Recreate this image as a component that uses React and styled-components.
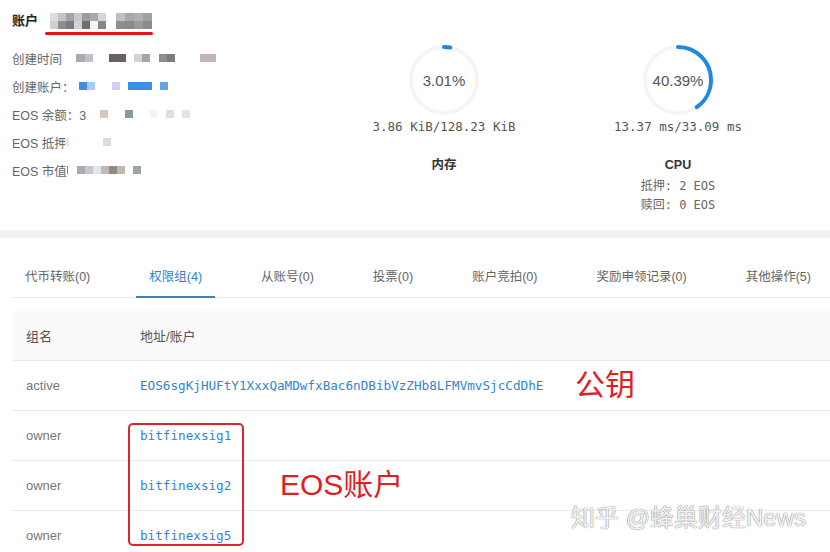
import React from 'react';
import styled, { createGlobalStyle } from 'styled-components';

const sans = `"Liberation Sans", "Noto Sans CJK SC", sans-serif`;
const mono = `"DejaVu Sans Mono", "Noto Sans CJK SC", monospace`;

const GlobalStyle = createGlobalStyle`
  body {
    margin: 0;
    background: #fff;
    font-family: ${sans};
    overflow: hidden;
  }
`;

// blurred (mosaic) values, in [gap before, width, colour]
const titleTiles = [
  [
    [0, 8, '#dcdcdc'], [0, 8, '#c4c4c8'], [0, 8, '#a4a4a8'], [0, 8, '#c9c9cb'], [0, 8, '#9c9c9c'], [0, 8, '#a9a9a9'], [0, 8, '#d6d6d6'],
    [10, 9, '#c0c0c0'], [0, 9, '#a8a8a8'], [0, 9, '#b0b0b0'], [0, 9, '#a0a0a0'],
  ],
  [
    [0, 8, '#cfcfcf'], [0, 8, '#8d8d90'], [0, 8, '#7c7c80'], [0, 8, '#d2d2d6'], [0, 8, '#6f6f72'], [0, 8, '#f4f4f4'], [0, 8, '#88888a'],
    [10, 9, '#8e8e8e'], [0, 9, '#8a8a8a'], [0, 9, '#9a9a9a'], [0, 9, '#8c8c8c'],
  ],
];

const rows = [
  {
    label: '创建时间',
    tiles: [[14, 9, '#a9a9b6'], [0, 8, '#c0c0c8'], [16, 17, '#6c6068'], [8, 8, '#d4d4d4'], [0, 8, '#a8a8a8'], [9, 8, '#908c88'], [0, 8, '#7c7c82'], [25, 16, '#c2b6b4']],
  },
  {
    label: '创建账户：',
    tiles: [[4, 8, '#3f8ee0'], [0, 8, '#a9cdf0'], [17, 8, '#cfd0f2'], [8, 24, '#3d8ee6'], [8, 8, '#62a4e6']],
  },
  {
    label: 'EOS 余额：3',
    tiles: [[14, 8, '#d4c8c0'], [17, 8, '#8a9a98'], [17, 8, '#f2f4f6'], [8, 8, '#dedede'], [8, 8, '#e4e4e4']],
  },
  {
    label: 'EOS 抵押',
    tiles: [[-2, 4, '#e8e8e8'], [34, 8, '#dcdcdc']],
  },
  {
    label: 'EOS 市值',
    tiles: [[0, 1, '#888'], [9, 8, '#b0a9ac'], [0, 8, '#c6c6cc'], [0, 8, '#e0e4ec'], [0, 8, '#c6b4b6'], [0, 8, '#8e8888'], [0, 8, '#c0b8a8'], [8, 8, '#9aa2aa']],
  },
];

const tabs = ['代币转账(0)', '权限组(4)', '从账号(0)', '投票(0)', '账户竞拍(0)', '奖励申领记录(0)', '其他操作(5)'];

const groups = [
  { name: 'active', value: 'EOS6sgKjHUFtY1XxxQaMDwfxBac6nDBibVzZHb8LFMVmvSjcCdDhE' },
  { name: 'owner', value: 'bitfinexsig1' },
  { name: 'owner', value: 'bitfinexsig2' },
  { name: 'owner', value: 'bitfinexsig5' },
];

const Mosaic = ({ tiles }) => (
  <TileRow>
    {tiles.map(([gap, w, c], i) => (
      <Tile key={i} $gap={gap} $w={w} $c={c} />
    ))}
  </TileRow>
);

const Gauge = ({ percent, usage, name, extra }) => {
  const r = 33;
  const len = 2 * Math.PI * r;
  return (
    <GaugeBox>
      <Ring>
        <svg width="76" height="76" viewBox="0 0 76 76">
          <circle cx="38" cy="38" r={r} fill="none" stroke="#f5f5f6" strokeWidth="4" />
          <circle
            cx="38"
            cy="38"
            r={r}
            fill="none"
            stroke="#2188e0"
            strokeWidth="4"
            strokeLinecap="round"
            strokeDasharray={`${(len * percent) / 100} ${len}`}
            transform="rotate(-90 38 38)"
          />
        </svg>
        <RingText>{percent.toFixed(2)}%</RingText>
      </Ring>
      <Usage>{usage}</Usage>
      <GaugeName>{name}</GaugeName>
      {extra && (
        <ExtraList>
          {extra.map((line) => (
            <Extra key={line}>{line}</Extra>
          ))}
        </ExtraList>
      )}
    </GaugeBox>
  );
};

const App = () => {
  return (
    <Page>
      <GlobalStyle />
      <Summary>
        <Info>
          <TitleRow>
            <Title>账户</Title>
            <Masked>
              {titleTiles.map((t, i) => (
                <Mosaic key={i} tiles={t} />
              ))}
            </Masked>
          </TitleRow>
          <InfoList>
            {rows.map((row) => (
              <InfoRow key={row.label}>
                <Label>{row.label}</Label>
                <Mosaic tiles={row.tiles} />
              </InfoRow>
            ))}
          </InfoList>
        </Info>
        <Gauge percent={3.01} usage="3.86 KiB/128.23 KiB" name="内存" />
        <Gauge
          percent={40.39}
          usage="13.37 ms/33.09 ms"
          name="CPU"
          extra={['抵押: 2 EOS', '赎回: 0 EOS']}
        />
      </Summary>
      <Band />
      <Tabs>
        {tabs.map((t) => (
          <Tab key={t} $active={t === '权限组(4)'}>
            {t}
          </Tab>
        ))}
      </Tabs>
      <TableWrap>
        <Table>
          <HeadRow>
            <NameCell>组名</NameCell>
            <ValueCell>地址/账户</ValueCell>
          </HeadRow>
          {groups.map((g) => (
            <Row key={g.value}>
              <NameCell>{g.name}</NameCell>
              <ValueCell>
                <Link>{g.value}</Link>
              </ValueCell>
            </Row>
          ))}
        </Table>
        <AccountBox />
        <Note $left={575} $top={57}>公钥</Note>
        <Note $left={280} $top={157}>EOS账户</Note>
      </TableWrap>
      <Watermark>知乎 @蜂巢财经News</Watermark>
    </Page>
  );
};

const Page = styled.div`
  position: relative;
  width: 830px;
  height: 552px;
  overflow: hidden;
  background: #fff;
`;
const Summary = styled.div`
  display: flex;
  height: 230px;
`;
const Info = styled.div`
  width: 344px;
  box-sizing: border-box;
  padding: 8px 12px 0;
`;
const TitleRow = styled.div`
  display: flex;
  align-items: center;
  height: 22px;
`;
const Title = styled.div`
  font-size: 13px;
  font-weight: bold;
  color: #222;
`;
const Masked = styled.div`
  position: relative;
  margin-left: 12px;
  margin-top: 3px;
  &::after {
    content: '';
    position: absolute;
    left: -5px;
    right: -1px;
    bottom: -6px;
    height: 3px;
    border-radius: 2px;
    background: #e0141a;
  }
`;
const TileRow = styled.div`
  display: flex;
  height: 8px;
`;
const Tile = styled.span`
  display: block;
  margin-left: ${(p) => p.$gap}px;
  width: ${(p) => p.$w}px;
  height: 8px;
  background: ${(p) => p.$c};
  filter: blur(0.4px);
`;
const InfoList = styled.div`
  margin-top: 14px;
`;
const InfoRow = styled.div`
  display: flex;
  align-items: center;
  height: 28px;
`;
const Label = styled.div`
  font-size: 12.5px;
  color: #666;
`;
const GaugeBox = styled.div`
  width: 200px;
  display: flex;
  flex-direction: column;
  align-items: center;
  padding-top: 42px;
  margin-right: 34px;
  color: #666;
`;
const Ring = styled.div`
  position: relative;
  width: 76px;
  height: 76px;
  svg {
    display: block;
  }
`;
const RingText = styled.div`
  position: absolute;
  inset: 0;
  display: flex;
  align-items: center;
  justify-content: center;
  font-size: 15px;
  color: #555;
`;
const Usage = styled.div`
  margin-top: 1px;
  font-family: ${mono};
  font-size: 12.5px;
  line-height: 16px;
  color: #555;
`;
const GaugeName = styled.div`
  margin-top: 22px;
  font-size: 12.5px;
  font-weight: bold;
  line-height: 16px;
  color: #333;
`;
const ExtraList = styled.div`
  margin-top: 4px;
  text-align: center;
`;
const Extra = styled.div`
  font-family: ${mono};
  font-size: 12px;
  line-height: 19px;
  color: #666;
`;
const Band = styled.div`
  height: 8px;
  background: #f1f2f4;
`;
const Tabs = styled.div`
  display: flex;
  gap: 33px;
  margin: 19px 0 0 12px;
  border-bottom: 1px solid #e8e9eb;
`;
const Tab = styled.div`
  position: relative;
  height: 40px;
  line-height: 40px;
  padding: 0 13px;
  font-size: 12.5px;
  white-space: nowrap;
  color: ${(p) => (p.$active ? '#2f82cc' : '#666')};
  &::after {
    content: '';
    display: ${(p) => (p.$active ? 'block' : 'none')};
    position: absolute;
    left: 0;
    right: 0;
    bottom: -1px;
    height: 2px;
    background: #3b80bf;
  }
`;
const TableWrap = styled.div`
  position: relative;
  margin-top: 13px;
`;
const Table = styled.div`
  margin-left: 12px;
`;
const HeadRow = styled.div`
  display: flex;
  align-items: center;
  height: 49px;
  background: #fafafa;
  color: #555;
`;
const Row = styled.div`
  display: flex;
  align-items: center;
  height: 49px;
  border-top: 1px solid #ececec;
  color: #777;
`;
const NameCell = styled.div`
  width: 114px;
  padding-left: 14px;
  box-sizing: border-box;
  font-size: 13px;
`;
const ValueCell = styled.div`
  padding-left: 14px;
  font-size: 13px;
`;
const Link = styled.span`
  font-family: ${mono};
  font-size: 12.65px;
  color: #2e86d4;
`;
const AccountBox = styled.div`
  position: absolute;
  left: 128px;
  top: 112px;
  width: 116px;
  height: 123px;
  box-sizing: border-box;
  border: 2px solid #d8262b;
  border-radius: 5px;
`;
const Note = styled.div`
  position: absolute;
  left: ${(p) => p.$left}px;
  top: ${(p) => p.$top}px;
  font-size: 30px;
  line-height: 34px;
  color: #e0201f;
`;
const Watermark = styled.div`
  position: absolute;
  left: 571px;
  top: 503px;
  font-size: 24px;
  line-height: 30px;
  color: #f2f2f2;
  text-shadow: 0 0 1px #7a7a7a, 0 0 1px #9a9a9a;
  white-space: nowrap;
`;

export default App;
